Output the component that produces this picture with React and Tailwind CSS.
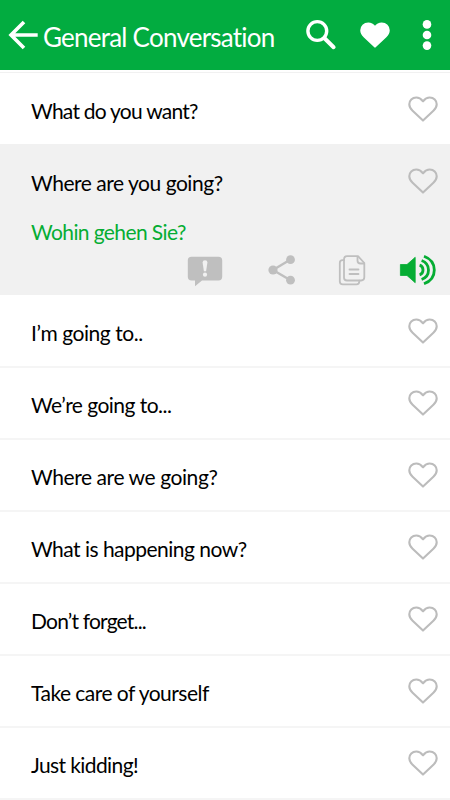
import React, { useState } from 'react';

const phrases = [
  { text: 'What do you want?', tracking: 'tracking-[-0.75px]' },
  { text: 'Where are you going?', translation: 'Wohin gehen Sie?', tracking: 'tracking-[-0.47px]' },
  { text: 'I’m going to..', tracking: 'tracking-[-0.45px]' },
  { text: 'We’re going to...', tracking: 'tracking-[-0.53px]' },
  { text: 'Where are we going?', tracking: 'tracking-[-0.42px]' },
  { text: 'What is happening now?', tracking: 'tracking-[-0.52px]' },
  { text: 'Don’t forget...', tracking: 'tracking-[-0.8px]' },
  { text: 'Take care of yourself', tracking: 'tracking-[-0.53px]' },
  { text: 'Just kidding!', tracking: 'tracking-[-0.6px]' }
];

const Heart = ({ filled }) => (
  <svg
    width="32"
    height="28"
    viewBox="0 0 32 28"
    fill={filled ? 'currentColor' : 'none'}
    stroke="currentColor"
    strokeWidth="2.1"
    strokeLinejoin="round"
    aria-hidden
  >
    <path d="M16 6.3C14 3.8 12 2.5 9.3 2.5C5.2 2.5 2.3 5.4 2.3 9.2C2.3 12 3.6 13.9 5.6 15.8L16 25.6L26.4 15.8C28.4 13.9 29.7 12 29.7 9.2C29.7 5.4 26.8 2.5 22.7 2.5C20 2.5 18 3.8 16 6.3Z" />
  </svg>
);

const BackIcon = () => (
  <svg width="32" height="32" viewBox="0 0 32 32" fill="none" stroke="currentColor" strokeWidth="3.6" aria-hidden>
    <path d="M18 3L5 16L18 29M5 16H31.7" />
  </svg>
);

const SearchIcon = () => (
  <svg width="32" height="32" viewBox="0 0 32 32" fill="none" stroke="currentColor" aria-hidden>
    <circle cx="12.3" cy="12" r="9.4" strokeWidth="3.4" />
    <path d="M19.5 19.3L28.6 28.2" strokeWidth="4" strokeLinecap="round" />
  </svg>
);

const MoreIcon = () => (
  <svg width="10" height="32" viewBox="0 0 10 32" fill="currentColor" aria-hidden>
    <circle cx="5" cy="5.4" r="4.3" />
    <circle cx="5" cy="16" r="4.3" />
    <circle cx="5" cy="26.6" r="4.3" />
  </svg>
);

const ReportIcon = () => (
  <svg width="36" height="32" viewBox="0 -1.2 36 32" className="overflow-visible" aria-hidden>
    <path d="M4.5 1.5H31.5Q35.2 1.5 35.2 5V21.5Q35.2 25.2 31.5 25.2H15L8 31V25.2H4.5Q.8 25.2 .8 21.5V5Q.8 1.5 4.5 1.5Z" fill="#bfbfbf" />
    <path d="M15.6 7.2Q15.6 5 18 5T20.4 7.2L19.1 16H16.9Z" fill="#f1f1f1" />
    <circle cx="18" cy="19.5" r="2.1" fill="#f1f1f1" />
  </svg>
);

const ShareIcon = () => (
  <svg width="28" height="30" viewBox="0 0 28 30" fill="currentColor" aria-hidden>
    <path d="M22.5 4.5L5 15L22.5 25.3" fill="none" stroke="currentColor" strokeWidth="2.4" />
    <circle cx="22.5" cy="4.7" r="4.4" />
    <circle cx="5" cy="15" r="4.6" />
    <circle cx="22.5" cy="25.2" r="4.4" />
  </svg>
);

const CopyIcon = () => (
  <svg
    width="28"
    height="31"
    viewBox="0 0 28 31"
    fill="none"
    stroke="currentColor"
    strokeWidth="1.8"
    strokeLinecap="round"
    strokeLinejoin="round"
    aria-hidden
  >
    <path d="M9 1.2H20L26.3 8V22.3Q26.3 25.5 23.2 25.5H9Q6 25.5 6 22.5V4.7Q6 1.2 9 1.2Z" />
    <path d="M19.5 2V5.5Q19.5 8.5 22.5 8.5H26" />
    <path d="M6 5.2H4.5Q1.8 5.2 1.8 8V26.2Q1.8 29.3 4.8 29.3H18.5Q21.3 29.3 21.3 26.5V25.7" />
    <path d="M11.5 14.5H20.5M11.5 19H20.5" />
  </svg>
);

const SpeakerIcon = () => (
  <svg width="38" height="32" viewBox="0 0 38 32" fill="none" stroke="currentColor" strokeWidth="2.8" aria-hidden>
    <path d="M1.4 10.5H8L16.2 3.3V28.7L8 21.5H1.4Z" fill="currentColor" strokeWidth="0.8" strokeLinejoin="round" />
    <path d="M20.6 11.2Q24 12.2 24 16T20.6 20.8" />
    <path d="M22.6 6.5Q29.5 9 29.5 16T22.6 25.5" />
    <path d="M25 2.2Q35.3 6 35.3 16T25 29.8" />
  </svg>
);

const PhraseRow = ({ phrase, open, flush, onToggle }) => (
  <li
    className={
      open
        ? 'h-[150px] bg-[#f1f1f1] pt-[2px]'
        : flush
          ? 'h-[72px] border-t border-[#f1f1f1] pt-px'
          : 'h-[72px] border-t-2 border-[#f5f5f5]'
    }
  >
    <div className="flex items-start justify-between pl-[31px] pr-[11px]">
      <button
        type="button"
        onClick={onToggle}
        className={`pt-[23px] text-[21px] leading-[28px] whitespace-nowrap text-black ${phrase.tracking}`}
      >
        {phrase.text}
      </button>
      <button type="button" aria-label="Favourite" className="pt-[21px] text-[#bcbcbc]">
        <Heart />
      </button>
    </div>
    {open && (
      <>
        <p className="mt-[21px] pl-[31px] text-[21px] leading-[28px] tracking-[-0.6px] text-[#05ad33]">
          {phrase.translation}
        </p>
        <div className="flex items-center justify-end pr-[13px] mt-[8px] text-[#bfbfbf]">
          <ReportIcon />
          <span className="ml-[45px]"><ShareIcon /></span>
          <span className="ml-[42px]"><CopyIcon /></span>
          <span className="ml-[33px] text-[#05ad33]"><SpeakerIcon /></span>
        </div>
      </>
    )}
  </li>
);

const App = () => {
  const [selected, setSelected] = useState(1);

  return (
    <div className="w-[450px] h-[800px] overflow-hidden bg-white font-['Lato',sans-serif]">
      <header className="flex items-center h-[70px] bg-[#02ac40] pl-[6px] pr-[18px] text-white">
        <BackIcon />
        <h1 className="ml-[5px] pt-[5px] text-[26px] leading-[33px] whitespace-nowrap tracking-[-0.77px]">
          General Conversation
        </h1>
        <div className="ml-auto flex items-center">
          <SearchIcon />
          <span className="ml-[22px]"><Heart filled /></span>
          <span className="ml-[31px]"><MoreIcon /></span>
        </div>
      </header>
      <ul className="mt-[2px] border-b-2 border-[#f5f5f5]">
        {phrases.map((phrase, i) => (
          <PhraseRow
            key={phrase.text}
            phrase={phrase}
            open={selected === i}
            flush={i === 0 || selected === i - 1}
            onToggle={() => setSelected(i)}
          />
        ))}
      </ul>
    </div>
  );
};

export default App;
